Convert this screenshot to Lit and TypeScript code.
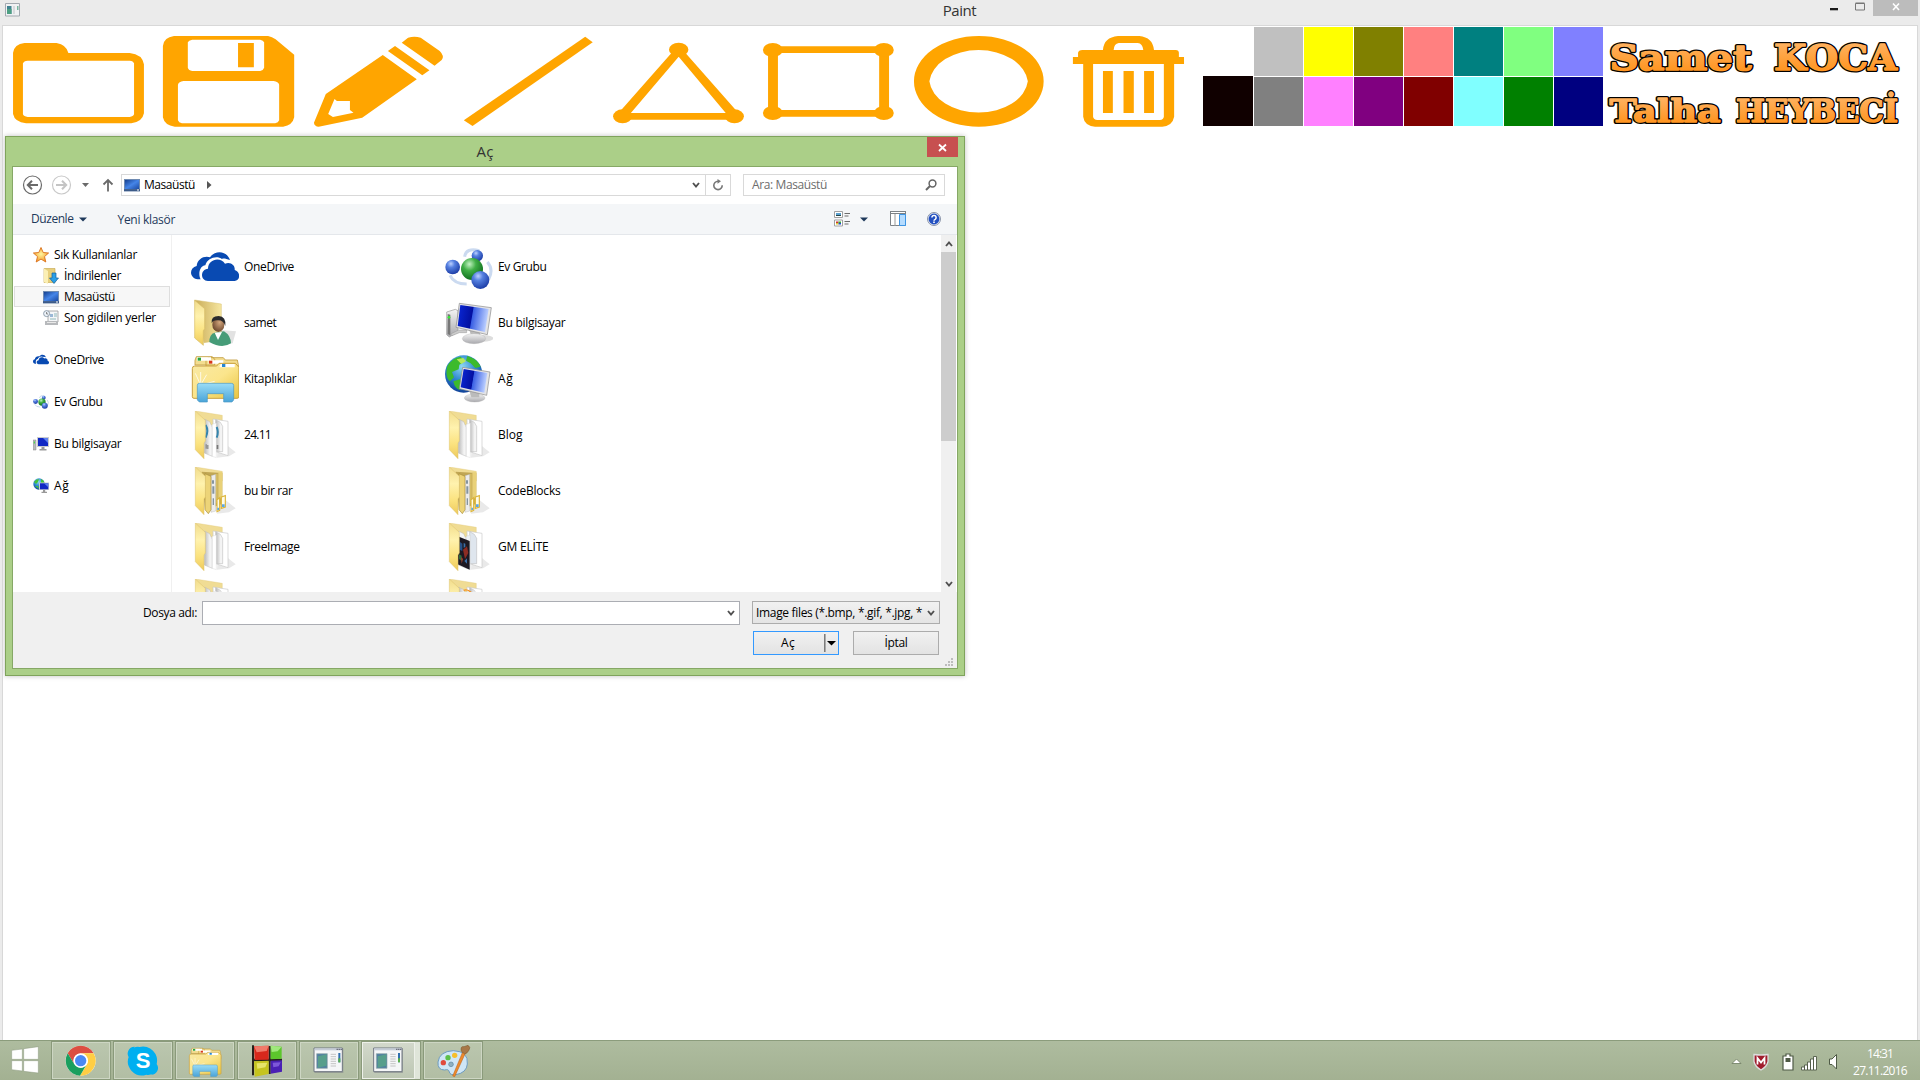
import { LitElement, html, svg, css, nothing } from "lit";
import { customElement, property } from "lit/decorators.js";
import { classMap } from "lit/directives/class-map.js";

/** A single line of text tracked so that it spans a given width. */
@customElement("fit-text")
class FitText extends LitElement {
  static styles = css`
    :host { display: inline-block; white-space: pre; }
    .run { display: inline-block; }
  `;
  @property() label = "";
  @property({ type: Number }) w = 0;
  render() {
    return html`<span class="run">${this.label}</span>`;
  }
  updated() {
    const run = this.renderRoot.querySelector(".run") as HTMLElement;
    run.style.letterSpacing = "0px";
    const natural = run.getBoundingClientRect().width;
    run.style.letterSpacing = `${(this.w - natural) / this.label.length}px`;
  }
}

const t = (label: string, w: number) => html`<fit-text label=${label} w=${w}></fit-text>`;

/* ---------- drawing tools ---------- */
const tools = [
  svg`<g transform="scale(.39541 .33333)"><path fill-rule="evenodd" d="M33 158Q36 133 62 129H143Q168 134 173 159H328Q360 163 364 193V340Q360 366 332 370H66Q37 366 33 342ZM70 182Q60 183 58 190V343Q60 349 70 351H328Q337 350 339 343V190Q337 183 328 182Z"/></g>`,
  svg`<g transform="scale(.39541 .33333)"><path fill-rule="evenodd" d="M412 138Q414 112 440 108H678Q688 110 697 118L744 164V352Q740 376 716 380H442Q416 376 412 352ZM486 119Q477 121 475 127V203Q477 211 486 213H658Q666 211 668 203V127Q666 121 658 119ZM602 129H642V202H602ZM464 243Q452 245 450 254V361Q452 368 460 370H696Q704 368 706 361V254Q704 245 692 243Z"/></g>`,
  svg`<g transform="scale(.39541 .33333)"><path fill-rule="evenodd" d="M968 165L1054 238L916 353L806 380Q795 379 794 368L824 282ZM846 297L830 342L842 351L894 338L885 330V303H852ZM999 138L1086 211L1068 226L981 153ZM1016 128L1032 113Q1048 107 1064 113L1112 153Q1125 168 1117 180L1099 197Z"/></g>`,
  svg`<g transform="scale(.39541 .33333)"><path d="M1480 110L1499 127L1195 378L1173 361Z"/></g>`,
  svg`<g transform="translate(600 0) scale(.39541 .33333)"><path fill-rule="evenodd" d="M183 156L47 339V359H350V339L214 156ZM199 170L318 339H78Z"/><ellipse cx="199" cy="149" rx="24.5" ry="21"/><ellipse cx="57" cy="349" rx="24" ry="21"/><ellipse cx="340" cy="349" rx="24" ry="21"/></g>`,
  svg`<g transform="translate(600 0) scale(.39541 .33333)"><path fill-rule="evenodd" d="M425 139H731V350H425ZM450 159V330H706V159Z"/><ellipse cx="437" cy="150" rx="25" ry="21"/><ellipse cx="718" cy="150" rx="25" ry="21"/><ellipse cx="437" cy="339" rx="25" ry="21"/><ellipse cx="718" cy="339" rx="25" ry="21"/></g>`,
  svg`<g transform="translate(600 0) scale(.39541 .33333)"><path fill-rule="evenodd" d="M794 244A164 136 0 0 1 1122 244A164 136 0 0 1 794 244ZM833 244A125 103 0 0 0 1082 244A125 103 0 0 0 833 244Z"/></g>`,
  svg`<g transform="translate(600 0) scale(.39541 .33333)"><path fill-rule="evenodd" d="M1272 150Q1274 112 1310 108H1364Q1398 112 1401 150H1456Q1464 151 1464 158V171H1477V192H1452V350Q1448 377 1422 380H1252Q1225 377 1222 350V192H1196V171H1209V158Q1210 151 1220 150ZM1299 150H1374Q1372 130 1360 129H1312Q1300 131 1299 150ZM1247 192V350Q1248 359 1258 360H1416Q1425 359 1426 350V192Z"/><path d="M1272 213h25V339h-25ZM1324 213h26V339h-26ZM1376 213h25V339h-25Z"/></g>`,
];

const palette = [
  "#ffffff", "#c0c0c0", "#ffff00", "#808000", "#ff8080", "#008080", "#80ff80", "#8080ff",
  "#100000", "#808080", "#ff80ff", "#800080", "#800000", "#80ffff", "#008000", "#000080",
];

const credits = [
  { label: "Samet", x: 1609.5, y: 70, size: 36, w: 142 },
  { label: "KOCA", x: 1774, y: 70, size: 36, w: 123 },
  { label: "Talha", x: 1609.5, y: 121.5, size: 31, w: 111 },
  { label: "HEYBECİ", x: 1736, y: 121.5, size: 31, w: 162 },
];

/* ---------- shared picture parts ---------- */
const defs = html`<svg class="defs" width="0" height="0"><defs>
  <linearGradient id="name" x1="0" y1="0" x2="0" y2="1"><stop offset=".2" stop-color="#ffb05c"/><stop offset=".85" stop-color="#ff941f"/></linearGradient>
  <linearGradient id="fold" x1="0" y1="0" x2="1" y2="1"><stop offset="0" stop-color="#f6dd85"/><stop offset=".4" stop-color="#fff3b8"/><stop offset="1" stop-color="#e9c75a"/></linearGradient>
  <linearGradient id="leaf" x1="0" y1="0" x2="0" y2="1"><stop offset="0" stop-color="#f1dc8c"/><stop offset=".35" stop-color="#fff2ae"/><stop offset=".7" stop-color="#fbe27e"/><stop offset="1" stop-color="#edc95c"/></linearGradient>
  <linearGradient id="foldb" x1="0" y1="0" x2="1" y2="0"><stop offset="0" stop-color="#c9ac58"/><stop offset="1" stop-color="#f6e6a0"/></linearGradient>
  <linearGradient id="page" x1="0" y1="0" x2="1" y2="0"><stop offset="0" stop-color="#b9b9b9"/><stop offset=".7" stop-color="#f4f4f4"/></linearGradient>
  <linearGradient id="screen" x1="0" y1="0" x2="1" y2=".15"><stop offset="0" stop-color="#0a28d8"/><stop offset=".5" stop-color="#0310a0"/><stop offset=".53" stop-color="#3a60e4"/><stop offset="1" stop-color="#b9cdff"/></linearGradient>
  <linearGradient id="desk" x1="0" y1="0" x2="1" y2="1"><stop offset="0" stop-color="#16408f"/><stop offset=".5" stop-color="#4585e8"/><stop offset="1" stop-color="#1c4ba4"/></linearGradient>
  <linearGradient id="metal" x1="0" y1="0" x2="0" y2="1"><stop offset="0" stop-color="#f4f4f4"/><stop offset="1" stop-color="#a9a9ad"/></linearGradient>
  <linearGradient id="lib" x1="0" y1="0" x2="1" y2="1"><stop offset="0" stop-color="#f8e9a6"/><stop offset=".5" stop-color="#fbe58c"/><stop offset="1" stop-color="#e9c440"/></linearGradient>
  <linearGradient id="stand" x1="0" y1="0" x2="0" y2="1"><stop offset="0" stop-color="#9adcf7"/><stop offset="1" stop-color="#4aa4d8"/></linearGradient>
  <radialGradient id="blue" cx=".38" cy=".28" r=".75"><stop offset="0" stop-color="#bcd0ff"/><stop offset=".35" stop-color="#5580e0"/><stop offset="1" stop-color="#1a3aa4"/></radialGradient>
  <radialGradient id="green" cx=".38" cy=".28" r=".75"><stop offset="0" stop-color="#c3f2c3"/><stop offset=".4" stop-color="#3fae45"/><stop offset="1" stop-color="#0c6a1c"/></radialGradient>
  <radialGradient id="globe" cx=".45" cy=".3" r=".75"><stop offset="0" stop-color="#8fd8f4"/><stop offset=".5" stop-color="#2c86cf"/><stop offset="1" stop-color="#0b3690"/></radialGradient>
  <radialGradient id="skin" cx=".6" cy=".35" r=".7"><stop offset="0" stop-color="#d2a57c"/><stop offset="1" stop-color="#66422a"/></radialGradient>
  <radialGradient id="star" cx=".5" cy=".45" r=".6"><stop offset="0" stop-color="#fff6a0"/><stop offset="1" stop-color="#f5921e"/></radialGradient>
</defs></svg>`;

const oneDrive = svg`<g fill="#094ab2"><path d="M53 118C28 114 26 84 50 78C52 56 74 46 90 52C102 32 138 28 150 60C138 56 130 54 126 57C112 46 82 52 76 76C58 78 54 104 62 118Z"/><path d="M84 123C60 122 60 88 84 86C84 58 120 48 135 71C154 64 166 78 164 90C182 94 182 122 164 123Z"/></g>`;
const homeGroup = svg`<path d="M104 50Q108 22 148 32M60 106Q72 132 110 132M172 66Q192 88 176 118" fill="none" stroke="#a9c2e6" stroke-width="9" opacity=".6"/><circle cx="142" cy="47" r="17" fill="url(#blue)"/><circle cx="68" cy="81" r="22" fill="url(#blue)"/><circle cx="126" cy="87" r="33" fill="url(#green)"/><circle cx="151" cy="120" r="27" fill="url(#blue)"/>`;
const computer = svg`<ellipse cx="158" cy="295" rx="32" ry="10" fill="#ddd"/><path d="M50 216L76 208L84 212V276L58 291L50 284Z" fill="url(#metal)" stroke="#999" stroke-width="2"/><path d="M53 222l8 2v62l-8-4Z" fill="#777"/><circle cx="57" cy="232" r="4" fill="#3e3"/><path d="M62 282l24-12h24v8H88l-22 9Z" fill="#ccc" stroke="#999" stroke-width="1.5"/><path d="M118 270l32 8 2 18h-26Z" fill="#bbb"/><ellipse cx="132" cy="296" rx="35" ry="15" fill="url(#metal)" stroke="#aaa"/><path d="M88 190L184 203L172 284L78 262Z" fill="#e4e4e6" stroke="#888" stroke-width="2"/><path d="M91 195L176 207L165 276L83 258Z" fill="url(#screen)"/>`;
const network = svg`<circle cx="101" cy="402" r="56" fill="url(#globe)"/><path d="M52 378Q66 354 92 350L104 364L88 374L86 388L66 396L72 412L60 424Q44 410 52 378ZM112 348Q142 356 152 380L136 384L122 370L108 362ZM70 424L90 418L98 432L90 450Q74 446 70 424Z" fill="#3cba2c"/><path d="M80 358l20-4 8 10-14 8Z" fill="#b5e85a"/><ellipse cx="134" cy="474" rx="31" ry="12" fill="url(#metal)" stroke="#aaa"/><path d="M118 452l30 6v14h-24Z" fill="#bbb"/><path d="M98 382L180 396L170 466L88 446Z" fill="#e4e4e6" stroke="#888" stroke-width="2"/><path d="M101 387L172 399L163 458L92 442Z" fill="url(#screen)"/>`;
const user = svg`<path d="M120 270l48 4-10 36-40 6Z" fill="#e2e2e2"/><path d="M44 180L124 192V300L72 308Z" fill="url(#foldb)" stroke="#d9c070" stroke-width="1.5"/><path d="M44 181L74 206V266L70 272V316L44 294Z" fill="url(#leaf)" stroke="#d8bd66" stroke-width="2"/><path d="M88 306Q88 282 104 278L132 274Q152 286 153 310Q126 328 88 306Z" fill="#469c78"/><path d="M104 278L114 300L126 276Z" fill="#fff"/><ellipse cx="115" cy="254" rx="18" ry="22" fill="url(#skin)"/><path d="M95 250Q92 228 116 228Q139 230 136 258Q130 240 114 241Q98 240 95 250Z" fill="#2a2a2c"/>`;
const library = svg`<path d="M45 361L49 350H97L104 358V375H45ZM78 362L84 353H130L136 360H172L175 374L177 400H78Z" fill="#f3dd90" stroke="#c29b3c" stroke-width="2.5"/><path d="M51 352h42v10H51ZM86 361h44v10H86Z" fill="#fff"/><path d="M37 386Q37 378 44 378H110L117 370H166L177 382V470Q177 475 171 475H42Q37 475 37 470Z" fill="url(#lib)" stroke="#c9a040" stroke-width="3"/><path d="M122 372h42v10H118Z" fill="#fff"/><path d="M53 353h10v9H53Z" fill="#2aa43c"/><path d="M87 362h10v9H87Z" fill="#d8391c"/><path d="M126 372h10v9H126Z" fill="#2587d4"/><path d="M62 435L46 400M62 435L80 404M62 435L104 424M62 435L62 396" stroke="#fff" stroke-width="3" opacity=".75"/><path d="M52 436Q52 430 58 430H154Q161 430 161 436V480L156 486H131V461H82V486H58L52 480Z" fill="url(#stand)" stroke="#4a97c4" stroke-width="2"/>`;

type Fill = "art" | "plain" | "files" | "photo";
const folder = (kind: Fill) => svg`
  <path d="M100 100L152 142L132 154L96 158Z" fill="#e9e9e9"/>
  <path d="M32 18L112 31V60L60 60Z" fill="#f0dc94" stroke="#e0c878" stroke-width="1"/>
  ${kind === "files"
    ? svg`<path d="M50 32L112 36V128L60 148Z" fill="#c0a654"/>
        <path d="M100 36L112 33V112H100Z" fill="#e9d178"/>
        <path d="M92 40L98 38V126H92Z" fill="#d9bf62"/>
        <path d="M78 44L92 40V150L78 154Z" fill="#ececec" stroke="#a8a8a8" stroke-width="1"/><path d="M81 58h6v10h-6ZM82 76h6v22h-6ZM83 112h4v20h-4Z" fill="#8494a0"/>
        <path d="M60 38L78 46V146L70 158L60 146Z" fill="#edd478" stroke="#a98f3c" stroke-width="2"/>
        <path d="M96 116l8-6v38l-8 4ZM109 108l12-4v34l-12 4Z" fill="#fffbe8" stroke="#dcb63c" stroke-width="3.500"/><path d="M111 130h8v8h-8ZM97 140h5v7h-5Z" fill="#5aa7e8"/>`
    : svg`<path d="M84 42L129 49V152L86 138Z" fill="#fff" stroke="#c9c9c9" stroke-width="2"/>
        <path d="M92 44L106 52L113 64V140L92 140Z" fill=${kind === "photo" ? "#dfe6ee" : "url(#page)"} stroke="#b4b4b4" stroke-width="1.500"/>
        <path d="M58 42L74 50L82 68V154L58 144Z" fill=${kind === "photo" ? "#f5f5f5" : "url(#page)"} stroke="#bbb" stroke-width="1.500"/>
        <path d="M82 58L94 54V158L82 154Z" fill=${kind === "photo" ? "#eef1f4" : "#fff"} stroke="#ccc" stroke-width="1"/>
        ${kind === "art" ? svg`<path d="M62 60Q72 76 62 98M95 66Q102 82 95 98" stroke="#3585ad" stroke-width="6" fill="none"/><path d="M62 118h3v13h-3ZM67 120h3v12h-3ZM95 120h5v12h-5Z" fill="#777"/>` : nothing}
        ${kind === "photo" ? svg`<path d="M56 58L92 72V158L56 142Z" fill="#1c1822"/><path d="M62 74l8 6v22l-8-4Z" fill="#274f86"/><path d="M72 98l12-10 4 20-10 18Z" fill="#8c2c24"/><path d="M60 112l8 4v16l-8-6Z" fill="#2d6a3a"/><path d="M74 78l5 2v10l-5 2ZM76 132l8-8v16Z" fill="#3a6fa8"/><path d="M66 120l6 6-4 14Z" fill="#a3402c"/>` : nothing}`}
  <path d="M31 18L61 46V108L57 114V161L31 134Z" fill="url(#leaf)" stroke="#dcc36c" stroke-width="1.5"/>`;

const deskIcon = html`<svg class="i16" viewBox="0 0 16 16"><path d="M0 2h16v12.3H0Z" fill="#6f8bb2"/><path d="M1 3h14v9H1Z" fill="url(#desk)"/><path d="M0 12.2h16v2H0Z" fill="#3c5a88"/><path d="M13 12.6h2v1h-2Z" fill="#fff"/></svg>`;

const sideIcons: Record<string, unknown> = {
  star: html`<svg class="i16" viewBox="0 0 16 16"><path d="M8 .5l2.2 5 5.4.5-4.1 3.6 1.3 5.4L8 12.1 3.2 15l1.3-5.4L.4 6l5.4-.5Z" fill="url(#star)" stroke="#d9701c" stroke-width=".9"/></svg>`,
  down: html`<svg class="i16" viewBox="0 0 16 16"><path d="M1 .5h11v14H1Z" fill="#e7cf7c" stroke="#c4a548" stroke-width=".6"/><path d="M1 .5l4 2.500v13L1 14Z" fill="#fbefb4"/><path d="M9 5h4v5h2.500L11 15.500 6.500 10H9Z" fill="#2a9fe6" stroke="#12639f" stroke-width=".7"/></svg>`,
  desk: deskIcon,
  recent: html`<svg class="i16" viewBox="0 0 16 16"><path d="M5 1h10v11H5Z" fill="#f4f6f8" stroke="#999" stroke-width=".8"/><path d="M7 4h3v3H7Z" fill="#9ab8d6"/><path d="M11 4h3M11 6h3M7 9h6" stroke="#7aa" stroke-width=".8"/><path d="M2 11h13v4H2Z" fill="#b7b9bc"/><path d="M4 12h9v1H4Z" fill="#e8e8e8"/><circle cx="3.600" cy="3.600" r="3" fill="#eef4fa" stroke="#8494a4" stroke-width=".9"/><path d="M3.600 2v2h1.500" stroke="#555" fill="none" stroke-width=".7"/></svg>`,
  one: html`<svg class="i16" viewBox="33 12 144 144">${oneDrive}</svg>`,
  home: html`<svg class="i16" viewBox="45 14 144 144">${homeGroup}</svg>`,
  pc: html`<svg class="i16" viewBox="0 0 16 16"><path d="M0 4h3v10H0Z" fill="#b9bbbd" stroke="#888" stroke-width=".5"/><path d="M.8 5.500h1v2h-1Z" fill="#3d3"/><path d="M4 1h12v10H4Z" fill="#c9cbd0"/><path d="M5 2h10v8H5Z" fill="#1128c4"/><path d="M10 2h5v5Z" fill="#5d80ee"/><path d="M8.500 11h3v2h2v1.500h-7V13h2Z" fill="#999"/></svg>`,
  net: html`<svg class="i16" viewBox="0 0 16 16"><circle cx="6" cy="6" r="5.700" fill="url(#globe)"/><path d="M1 4Q3 1 6 1L5 4 3 6ZM8 1q3 1 3.500 4H8ZM2 8l3 0 1 3Z" fill="#45c33a"/><path d="M6 4.500h10v7.500H6Z" fill="#c9cbd0"/><path d="M7 5.300h8.300v6H7Z" fill="#1128c4"/><path d="M11 5.300h4.300v4Z" fill="#5d80ee"/><path d="M10 12h2.200v1.800H14V15H8.500v-1.200H10Z" fill="#999"/></svg>`,
};

const places = [
  { icon: "star", label: "Sık Kullanılanlar", w: 83, depth: 0 },
  { icon: "down", label: "İndirilenler", w: 57, depth: 1 },
  { icon: "desk", label: "Masaüstü", w: 51, depth: 1, selected: true },
  { icon: "recent", label: "Son gidilen yerler", w: 92, depth: 1 },
  { icon: "one", label: "OneDrive", w: 50, depth: 0, top: true },
  { icon: "home", label: "Ev Grubu", w: 48.5, depth: 0, top: true },
  { icon: "pc", label: "Bu bilgisayar", w: 67.5, depth: 0, top: true },
  { icon: "net", label: "Ağ", w: 15.5, depth: 0, top: true },
];

const entries = [
  { label: "OneDrive", w: 50, box: "33 9 144 144", art: oneDrive },
  { label: "Ev Grubu", w: 48.5, box: "45 9 144 144", art: homeGroup },
  { label: "samet", w: 32.5, box: "33 177 144 144", art: user },
  { label: "Bu bilgisayar", w: 67.5, box: "45 177 144 144", art: computer },
  { label: "Kitaplıklar", w: 52.5, box: "33 345 144 144", art: library },
  { label: "Ağ", w: 15.5, box: "45 345 144 144", art: network },
  { label: "24.11", w: 27, box: "18 18 144 144", art: folder("art") },
  { label: "Blog", w: 24.5, box: "18 18 144 144", art: folder("plain") },
  { label: "bu bir rar", w: 48.5, box: "18 18 144 144", art: folder("files") },
  { label: "CodeBlocks", w: 62.5, box: "18 18 144 144", art: folder("files") },
  { label: "FreeImage", w: 55.5, box: "18 18 144 144", art: folder("plain") },
  { label: "GM ELİTE", w: 50.5, box: "18 18 144 144", art: folder("photo") },
  { label: "", w: 0, box: "18 18 144 144", art: folder("plain") },
  { label: "", w: 0, box: "18 18 144 144", art: svg`${folder("plain")}<path d="M74 52q12-4 22 6" stroke="#f7931e" stroke-width="4" fill="none"/>` },
];

const chevron = (dir: "up" | "down") =>
  html`<svg class="chev" viewBox="0 0 8 6"><path d=${dir === "down" ? "M1 1L4 4.500L7 1" : "M1 5L4 1.500L7 5"} fill="none" stroke="#505050" stroke-width="1.900"/></svg>`;

/* ---------- taskbar pictures, drawn on a 60x38 tile at three units per pixel ---------- */
const appWindow = svg`<path d="M44 19h86v74H44Z" fill="#7d8288" opacity=".5"/><path d="M42 18h85v71H42Z" fill="#f5f6f8" stroke="#6f7680" stroke-width="3"/><g transform="translate(0 3)"><path d="M44 16h82v6H44Z" fill="#c5ccd6"/><path d="M110 17h3v4h-3ZM116 17h3v4h-3ZM122 17h3v4h-3Z" fill="#445"/><path d="M50 32h32v44H50Z" fill="#4f7fa0" stroke="#9aa" stroke-width="2"/><path d="M54 40l26-6v34l-26 6Z" fill="#5aa884" opacity=".75"/><path d="M92 34h16M92 41h16M92 48h16M92 55h16M92 62h16M92 69h16" stroke="#aaa" stroke-width="2"/><path d="M115 30h6v28h-6Z" fill="#2f6fae"/><path d="M115 46h6v12h-6Z" fill="#58b04a"/></g>`;

const tasks = [
  svg`<g transform="translate(86 56)"><circle r="45" fill="#fff"/><path d="M-39 -22A45 45 0 0 1 39 -22H0A22 22 0 0 0 -20 9Z" fill="#dc4e41"/><path d="M39 -22A45 45 0 0 1 -2 45L19 11A22 22 0 0 0 0 -22Z" fill="#ffce44"/><path d="M-39 -22A45 45 0 0 0 -2 45L17 13A22 22 0 0 1 -19 11Z" fill="#1a9f5e"/><circle r="21" fill="#fff"/><circle r="17" fill="#4a89f3"/></g>`,
  svg`<g transform="translate(87 56)"><path d="M-42 -14A26 26 0 0 1 -10 -41A42 42 0 0 1 41 10A26 26 0 0 1 10 42A42 42 0 0 1 -42 -14Z" fill="#00aff0"/><path d="M-25 -42a20 20 0 0 0-15 34ZM25 42a20 20 0 0 0 16-32Z" fill="#00aff0"/><text y="22" text-anchor="middle" class="skype">S</text></g>`,
  svg`<g transform="translate(15 -200) scale(.679 .625)">${library}</g>`,
  svg`<path d="M42 10h6v90h-6ZM92 12h6v84h-6Z" fill="#26221c"/><path d="M44 50h88v8H44Z" fill="#26221c"/><path d="M48 13l44-2v42l-42 1Z" fill="#d8281c"/><path d="M48 13l44-2-6 16-30 4Z" fill="#f07a6a"/><path d="M98 11l33 3v36l-33 2Z" fill="#5cc62c"/><path d="M98 11l33 3-12 14-18 2Z" fill="#a0e87c"/><path d="M48 58l44-2v40l-42 8Z" fill="#c5c41e"/><path d="M56 64l32-2-6 14-24 4Z" fill="#e6e46a"/><path d="M98 56l34-1v34l-34 6Z" fill="#4a20b4"/><path d="M104 62l24-1-6 12-16 3Z" fill="#7c58d8"/>`,
  appWindow,
  appWindow,
  svg`<path d="M42 60Q46 28 88 26Q134 28 130 66Q128 92 96 98Q78 100 76 90Q74 80 62 84Q40 84 42 60Z" fill="#cfe6f6" stroke="#6e9cc0" stroke-width="3"/><circle cx="58" cy="62" r="8" fill="#e04a3c"/><circle cx="72" cy="47" r="8" fill="#5cc04a"/><circle cx="92" cy="40" r="8" fill="#f7bf2a"/><circle cx="81" cy="67" r="7" fill="#8fb0c0" stroke="#5e86a0" stroke-width="2"/><path d="M116 30l8 4-32 70-6-2Z" fill="#ee8a2c" stroke="#b55d14" stroke-width="1.500"/><path d="M112 28Q108 12 120 14L132 10Q142 16 134 26Q130 34 122 36Z" fill="#a87848" stroke="#7a5228" stroke-width="1.500"/>`,
];

@customElement("app-root")
class AppRoot extends LitElement {
  static styles = css`
    :host { display: block; width: 1920px; height: 1080px; overflow: hidden; font-family: "Open Sans", "Noto Sans", sans-serif; font-size: 12px; color: #000; background: #ebebeb; }
    * { box-sizing: border-box; }
    svg { display: block; flex: none; }
    .defs { position: absolute; }
    .desktop { display: flex; flex-direction: column; height: 1080px; }
    .titlebar { height: 25px; flex: none; display: grid; grid-template-columns: 1fr auto 1fr; padding: 0 2px 0 1px; color: #333; }
    .titlebar .icon { margin: 3px 0 0 4px; }
    .caption { font-size: 15px; line-height: 20px; height: 20px; }
    .controls { display: flex; justify-content: flex-end; }
    .client { flex: 1; min-height: 0; margin: 0 2px; border: 1px solid #d8d8d8; border-bottom: 0; background: #fff; overflow: hidden; }
    .ribbon { height: 110px; display: flex; }
    .tool { width: 150px; height: 110px; fill: #ffa500; }
    .palette { display: grid; grid-template-columns: 50px repeat(7, 49px); grid-template-rows: 49px 49px; gap: 1px; margin-top: 1px; align-content: start; }
    .dark { margin-top: -1px; }
    .credit { font-family: "DejaVu Serif", serif; font-weight: bold; stroke-linejoin: round; }
    .credit.edge { fill: #000; stroke: #000; stroke-width: 4px; }
    .credit.face { fill: url(#name); stroke: url(#name); stroke-width: 1.400px; }

    .dialog { width: 960px; height: 540px; margin-left: 2px; border: 1px solid #7fa35c; background: #abcf88; padding: 0 6px 6px; box-shadow: 0 0 5px rgba(0,0,0,.25); display: flex; flex-direction: column; }
    .head { height: 29px; flex: none; display: grid; grid-template-columns: 1fr auto 1fr; color: #333; }
    .head .title { font-size: 15px; line-height: 28px; height: 28px; }
    .close { justify-self: end; width: 31px; height: 20px; background: #c75050; display: grid; place-items: center; }
    .pane { flex: 1; min-height: 0; border: 1px solid #86a866; background: #fff; display: flex; flex-direction: column; }
    .nav { height: 37px; flex: none; display: flex; align-items: center; padding: 0 12px 1px 9px; }
    .address { width: 610px; height: 22px; border: 1px solid #d9d9d9; display: flex; align-items: center; padding-left: 2px; margin-left: 7px; }
    .address .where { margin: -1px 0 1px 4px; }
    .address .sep { margin-left: 12px; }
    .address .drop { margin-left: auto; padding-right: 5px; }
    .refresh { align-self: stretch; width: 25px; border-left: 1px solid #d9d9d9; display: grid; place-items: center; }
    .search { width: 202px; height: 22px; border: 1px solid #d9d9d9; margin-left: 12px; display: flex; align-items: center; justify-content: space-between; padding: 0 7px 0 8px; color: #6d6d6d; }
    .search fit-text { margin-top: -2px; }
    .commands { height: 31px; flex: none; background: #f4f6f8; border-bottom: 1px solid #e4e7eb; display: flex; align-items: center; padding: 0 16px 0 18px; color: #1e395b; }
    .commands fit-text { margin-top: -2px; }
    .commands .fresh { margin-left: 31px; }
    .commands .tri { margin-left: 5px; }
    .commands .views { margin-left: auto; }
    .commands .tri2 { margin: 0 22px 0 10px; }
    .commands .help { margin-left: 21px; }
    .main { flex: 1; min-height: 0; display: flex; }
    .side { width: 159px; border-right: 1px solid #f0f0f0; padding: 9px 1px 0; }
    .place { height: 21px; display: flex; align-items: center; gap: 5px; padding-left: 18px; border: 1px solid transparent; }
    .place.deep { padding-left: 28px; }
    .place.top { margin-top: 21px; }
    .place.selected { background: #f7f7f7; border-color: #dedede; width: 156px; }
    .i16 { width: 16px; height: 16px; }
    .files { flex: 1; display: grid; grid-template-columns: 254px 254px; grid-auto-rows: 56px; padding: 4px 0 0 19px; overflow: hidden; align-content: start; }
    .entry { display: flex; align-items: center; gap: 5px; height: 56px; }
    .entry fit-text { margin-top: -2px; }
    .i48 { width: 48px; height: 48px; }
    .scroll { width: 15px; margin-right: 1px; background: #f0f0f0; display: flex; flex-direction: column; align-items: center; }
    .scroll .btn { height: 17px; width: 15px; display: grid; place-items: center; }
    .thumb { width: 15px; height: 189px; background: #cdcdcd; }
    .scroll .end { margin-top: auto; }
    .chev { width: 8px; height: 6px; }
    .foot { height: 76px; flex: none; background: #f0f0f0; padding: 9px 4px 0 130px; }
    .row { display: flex; align-items: flex-start; }
    .row .lab { line-height: 23px; width: 59px; }
    .input { width: 538px; height: 24px; border: 1px solid #abadb3; background: #fff; display: flex; align-items: center; justify-content: flex-end; padding-right: 4px; }
    .select { width: 188px; height: 23px; margin-left: 12px; border: 1px solid #acacac; background: linear-gradient(#f1f1f1, #e4e4e4); display: flex; align-items: center; padding: 0 4px 0 3px; }
    .select .value { height: 20px; line-height: 20px; }
    .select .chev { margin-left: auto; }
    .actions { display: flex; padding: 6px 0 0 610px; }
    .button { width: 86px; height: 24px; border: 1px solid #acacac; background: linear-gradient(#f1f1f1, #e3e3e3); display: flex; align-items: center; justify-content: center; margin-left: 14px; }
    .button fit-text { margin-top: -1px; }
    .button.primary { border-color: #3399ff; margin-left: 0; justify-content: flex-start; padding-left: 27px; }
    .split { margin-left: auto; margin-right: 1px; }
    .grip { margin: 3px 0 0 auto; }

    .taskbar { height: 40px; flex: none; background: linear-gradient(#aebc9f, #a3b192); border-top: 1px solid #8b9c7c; display: flex; align-items: stretch; }
    .start { width: 51px; padding: 5px 0 0 11px; }
    .tasks { display: flex; gap: 2px; }
    .task { width: 60px; border: 1px solid #8a9a7b; box-shadow: inset 0 0 0 1px #cdd6c3; background: rgba(255,255,255,.16); }
    .task svg { width: 58px; height: 37px; }
    .task.active { background: linear-gradient(#d3d9cc, #bcc6b2); box-shadow: inset 0 0 0 1px #eef1ea; width: 55px; }
    .task.active svg { width: 53px; }
    .stack { width: 6px; margin-left: -3px; border: 1px solid #8a9a7b; border-left: 0; background: #dfe5d9; }
    .tray { margin-left: auto; display: flex; align-items: center; padding-right: 13px; color: #fff; }
    .clock { width: 54px; text-align: center; line-height: 17px; padding-top: 2px; margin-left: 16px; display: flex; flex-direction: column; align-items: center; font-size: 12px; }
    .skype { font: bold 66px "Liberation Sans", sans-serif; fill: #fff; }
  `;

  render() {
    return html`${defs}
      <div class="desktop">
        <div class="titlebar">
          <svg class="icon" width="15" height="14" viewBox="0 0 15 14"><path d="M.5.5h14v12.500H.5Z" fill="#f0f1f3" stroke="#a3a9b0"/><path d="M2 3h4.500v8H2Z" fill="#3f8290"/><path d="M2 6h4.500v5H2Z" fill="#4d9f82"/><path d="M8 3h2v8H8Z" fill="#d8dadd"/><path d="M12 3h1.500v4H12Z" fill="#78b6a0"/></svg>
          <span class="caption">${t("Paint", 33.5)}</span>
          <div class="controls">
            <svg width="91" height="16" viewBox="0 0 91 16"><path d="M3 8h8v2.300H3Z" fill="#1a1a1a"/><path d="M28.500 3.500h9v6.500h-9ZM28.500 3h9" fill="none" stroke="#777"/><path d="M46 0h45v16H46Z" fill="#bcbcbc"/><path d="M66 3.500l6 6.500M72 3.500l-6 6.500" stroke="#fff" stroke-width="1.600"/></svg>
          </div>
        </div>
        <div class="client">
          <div class="ribbon">
            ${tools.map((art, i) => html`<svg class="tool" viewBox="${3 + i * 150} 26 150 110">${art}</svg>`)}
            <div class="palette">
              ${palette.map((c, i) => html`<span class=${classMap({ dark: i === 8 })} style="background:${c}"></span>`)}
            </div>
            <svg width="313" height="110" viewBox="1603 26 313 110">
              ${["edge", "face"].map((layer) => credits.map((c) => svg`<text class="credit ${layer}" aria-hidden=${layer === "edge"} x=${c.x} y=${c.y} font-size=${c.size} textLength=${c.w} lengthAdjust="spacingAndGlyphs">${c.label}</text>`))}
            </svg>
          </div>
          ${this.dialog()}
        </div>
        ${this.taskbar()}
      </div>`;
  }

  private dialog() {
    return html`<div class="dialog">
      <div class="head">
        <span></span><span class="title">${t("Aç", 17)}</span>
        <span class="close"><svg width="9" height="9" viewBox="0 0 9 9"><path d="M1 1.500l7 6.500M8 1.500l-7 6.500" stroke="#fff" stroke-width="1.800"/></svg></span>
      </div>
      <div class="pane">
        <div class="nav">
          <svg width="92" height="22" viewBox="22 174 92 22" fill="none"><circle cx="32.500" cy="185" r="9" stroke="#6b6b6b" stroke-width="1.200"/><path d="M38 185H28.500M32 180.800l-4.200 4.200 4.200 4.200" stroke="#6a6a6a" stroke-width="2"/><circle cx="61.500" cy="185" r="9" stroke="#c9c9c9" stroke-width="1.200"/><path d="M56 185h9.500M62 180.800l4.200 4.200-4.200 4.200" stroke="#c4c4c4" stroke-width="2"/><path d="M82 183h7l-3.500 4Z" fill="#6a6a6a"/><path d="M108 191.500V180.500M103.500 184.500l4.500-4.500 4.500 4.500" stroke="#6a6a6a" stroke-width="1.800"/></svg>
          <div class="address">
            ${deskIcon}<span class="where">${t("Masaüstü", 51)}</span>
            <svg class="sep" width="5" height="8" viewBox="0 0 5 8"><path d="M0 0l4.500 4L0 8Z" fill="#555"/></svg>
            <span class="drop">${chevron("down")}</span>
            <span class="refresh"><svg width="12" height="12" viewBox="0 0 12 12"><path d="M10.200 6.200A4.200 4.200 0 1 1 6 2.200" fill="none" stroke="#777" stroke-width="1.600"/><path d="M5.500 0v4.800L9 2.300Z" fill="#777"/></svg></span>
          </div>
          <div class="search">${t("Ara: Masaüstü", 75)}
            <svg width="12" height="12" viewBox="0 0 12 12"><circle cx="7.500" cy="4.500" r="3.400" fill="none" stroke="#666" stroke-width="1.500"/><path d="M5 7L1 11" stroke="#666" stroke-width="2"/></svg>
          </div>
        </div>
        <div class="commands">
          ${t("Düzenle", 42.5)}<svg class="tri" width="8" height="5" viewBox="0 0 8 5"><path d="M0 .5h8L4 4.500Z" fill="#1e395b"/></svg>
          <span class="fresh">${t("Yeni klasör", 57.5)}</span>
          <svg class="views" width="16" height="16" viewBox="0 0 16 16"><path d="M.5.5h8v6h-8ZM.5 9h8v6h-8Z" fill="#fff" stroke="#a0a0a0"/><path d="M2 2h5v3H2Z" fill="#5aa0d0"/><path d="M2 4h5v1H2Z" fill="#244"/><path d="M2 10.500h2.500v1.500H2Z" fill="#c33"/><path d="M4.500 10.500H7v1.500H4.500Z" fill="#3a3"/><path d="M2 12h2.500v1.500H2Z" fill="#dc3"/><path d="M4.500 12H7v1.500H4.500Z" fill="#24c"/><path d="M10.500 2.500h5.500M10.500 5h4M10.500 10.500h5.500M10.500 13h4" stroke="#6d6d6d"/></svg>
          <svg class="tri2" width="8" height="5" viewBox="0 0 8 5"><path d="M0 .5h8L4 4.500Z" fill="#1e395b"/></svg>
          <svg width="16" height="16" viewBox="0 0 16 16"><path d="M.5.5h15v14h-15Z" fill="#fff" stroke="#7d8287"/><path d="M0 0h16v3H0Z" fill="#7d8287"/><path d="M1 1h14v1H1Z" fill="#fff"/><path d="M5 3v12" stroke="#9a9a9a"/><path d="M9.500 3.500h6v11h-6Z" fill="#b5dcff" stroke="#3d95e4"/></svg>
          <svg class="help" width="14" height="14" viewBox="0 0 14 14"><circle cx="7" cy="7" r="6.500" fill="#dfe6f5" stroke="#8a94a8"/><circle cx="7" cy="7" r="5.400" fill="#2350c0"/><path d="M4.900 5.500a2.100 2.100 0 1 1 3.200 1.800q-1.100.6-1.100 1.500" fill="none" stroke="#fff" stroke-width="1.500"/><path d="M6.200 9.600h1.600v1.500H6.200Z" fill="#fff"/></svg>
        </div>
        <div class="main">
          <div class="side">
            ${places.map((p) => html`<div class=${classMap({ place: true, deep: p.depth === 1, top: !!p.top, selected: !!p.selected })}>${sideIcons[p.icon]}${t(p.label, p.w)}</div>`)}
          </div>
          <div class="files">
            ${entries.map((e) => html`<div class="entry"><svg class="i48" viewBox=${e.box}>${e.art}</svg>${e.label ? t(e.label, e.w) : nothing}</div>`)}
          </div>
          <div class="scroll"><span class="btn">${chevron("up")}</span><span class="thumb"></span><span class="btn end">${chevron("down")}</span></div>
        </div>
        <div class="foot">
          <div class="row">
            <span class="lab">${t("Dosya adı:", 54)}</span>
            <div class="input">${chevron("down")}</div>
            <div class="select"><span class="value">${t("Image files (*.bmp, *.gif, *.jpg, *", 166)}</span>${chevron("down")}</div>
          </div>
          <div class="actions">
            <div class="button primary">${t("Aç", 14)}<svg class="split" width="13" height="18" viewBox="0 0 13 18"><path d="M.8 0v18" stroke="#777" stroke-width="1.500"/><path d="M3 7h9l-4.500 4.500Z" fill="#000"/></svg></div>
            <div class="button">${t("İptal", 23)}</div>
          </div>
          <svg class="grip" width="8" height="8" viewBox="0 0 8 8"><path d="M6 0h2v2H6ZM3 3h2v2H3ZM6 3h2v2H6ZM0 6h2v2H0ZM3 6h2v2H3ZM6 6h2v2H6Z" fill="#bdbdbd"/></svg>
        </div>
      </div>
    </div>`;
  }

  private taskbar() {
    return html`<div class="taskbar">
      <div class="start"><svg width="28" height="28" viewBox="34 47 84 84"><path d="M36 60L68 56V87H36ZM72 55L116 49V87H72ZM36 91H68V122L36 118ZM72 91H116V128L72 123Z" fill="#fff" stroke="#8b987e" stroke-width="1.500"/></svg></div>
      <div class="tasks">
        ${tasks.map((art, i) => html`<div class=${classMap({ task: true, active: i === 5 })}><svg viewBox=${i === 5 ? "7 0 159 111" : "0 0 174 111"}>${art}</svg></div>${i === 5 ? html`<div class="stack"></div>` : nothing}`)}
      </div>
      <div class="tray">
        <svg width="106" height="20" viewBox="1731 1050 106 20"><path d="M1732 1062.500l4.500-4.500 4.500 4.500Z" fill="#fff" stroke="#6c7a5e" stroke-width=".8"/><path d="M1754 1053.500q7 1 14 0v7q-1 5-7 8.500-6-3.500-7-8.500Z" fill="#a01c2c" stroke="#ddd" stroke-width="1.300"/><path d="M1757.500 1063.500v-6.500l3.500 4.500 3.500-4.500v6.500" fill="none" stroke="#fff" stroke-width="1.800"/><path d="M1786 1053h4v2h3v14h-10v-14h3Z" fill="#fff" stroke="#4f5a46" stroke-width="1.200"/><path d="M1785.500 1057h5v4h-5Z" fill="#4f5a46"/><path d="M1801.500 1066h3v3h-3ZM1804.500 1064h3v5h-3ZM1807.500 1061h3v8h-3ZM1810.500 1058h3v11h-3ZM1813.500 1055.500h3v13.500h-3Z" fill="#fff" stroke="#4f5a46" stroke-width=".9"/><path d="M1829.500 1058h2.500l4.500-4.500v14.500l-4.500-4.500h-2.500Z" fill="#fff" stroke="#4f5a46"/></svg>
        <div class="clock">${t("14:31", 26)}${t("27.11.2016", 54)}</div>
      </div>
    </div>`;
  }
}
